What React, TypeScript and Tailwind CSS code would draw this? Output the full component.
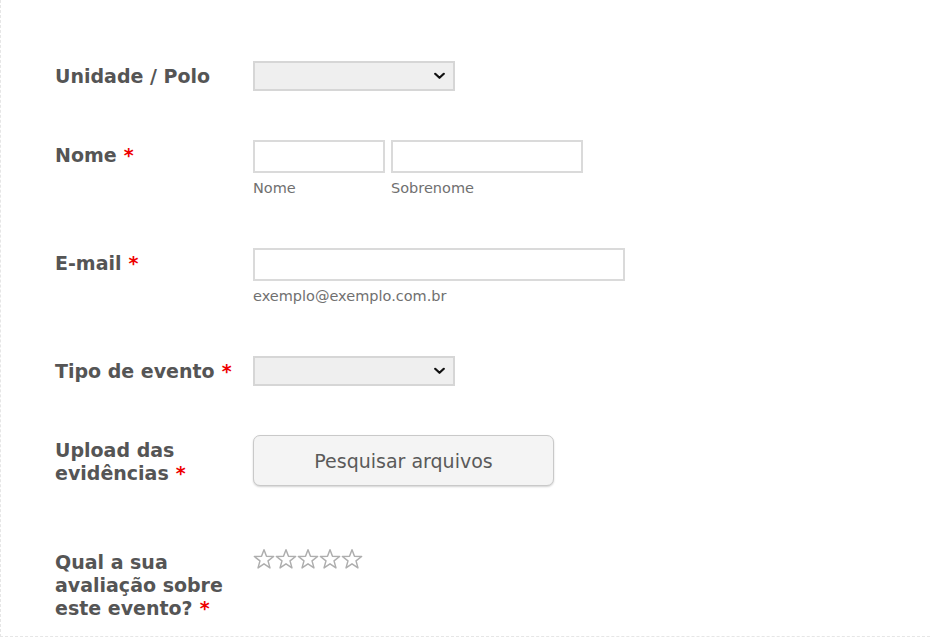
import React from "react";

const font = { fontFamily: '"DejaVu Sans", Verdana, sans-serif' };

function Chevron() {
  return (
    <svg width="11" height="7" viewBox="0 0 11 7" className="absolute right-[8px] top-1/2 -translate-y-1/2">
      <path d="M1.2 1.2 L5.5 5.3 L9.8 1.2" fill="none" stroke="#111" strokeWidth="2.2" strokeLinecap="round" strokeLinejoin="round" />
    </svg>
  );
}

function Select() {
  return (
    <div className="relative w-[202px] h-[30px] bg-[#efefef] border-2 border-[#d6d6d6]">
      <Chevron />
    </div>
  );
}

function Star() {
  return (
    <svg width="22" height="22" viewBox="0 0 24 24">
      <path
        d="M12 1.8 L14.7 9 L22.5 9.3 L16.4 14.1 L18.5 21.7 L12 17.3 L5.5 21.7 L7.6 14.1 L1.5 9.3 L9.3 9 Z"
        fill="#fff"
        stroke="#aeaeae"
        strokeWidth="1.6"
        strokeLinejoin="round"
      />
    </svg>
  );
}

function Req() {
  return <span className="text-[#e00] ml-[7px]">*</span>;
}

function Label({ children }: { children: React.ReactNode }) {
  return (
    <div className="w-[198px] shrink-0 pt-[4px] pr-[4px] text-[19px] leading-[23px] font-bold text-[#555]">
      {children}
    </div>
  );
}

export default function App() {
  return (
    <div style={font} className="w-[930px] h-[638px] bg-white overflow-hidden">
      <div className="h-[637px] border-l border-b border-dashed border-[#e6e6e6] pl-[54px] pt-[61px]">
        <div className="flex items-start">
          <Label>Unidade / Polo</Label>
          <Select />
        </div>

        <div className="flex items-start mt-[49px]">
          <Label>
            Nome<Req />
          </Label>
          <div className="flex gap-[6px]">
            <div>
              <div className="w-[132px] h-[33px] border-2 border-[#dadada] bg-white" />
              <div className="mt-[7px] text-[14.5px] leading-[17px] text-[#707070]">Nome</div>
            </div>
            <div>
              <div className="w-[192px] h-[33px] border-2 border-[#dadada] bg-white" />
              <div className="mt-[7px] text-[14.5px] leading-[17px] text-[#707070]">Sobrenome</div>
            </div>
          </div>
        </div>

        <div className="flex items-start mt-[51px]">
          <Label>
            E-mail<Req />
          </Label>
          <div>
            <div className="w-[372px] h-[33px] border-2 border-[#dadada] bg-white" />
            <div className="mt-[7px] text-[14.5px] leading-[17px] text-[#707070]">exemplo@exemplo.com.br</div>
          </div>
        </div>

        <div className="flex items-start mt-[51px]">
          <Label>
            <span className="whitespace-nowrap">
              Tipo de evento<Req />
            </span>
          </Label>
          <Select />
        </div>

        <div className="flex items-start mt-[49px]">
          <div className="w-[198px] shrink-0 pt-[4px] pr-[40px] text-[19px] leading-[23px] font-bold text-[#555]">
            Upload das evidências<Req />
          </div>
          <div className="w-[301px] h-[51px] rounded-[7px] border border-[#c9c9c9] bg-[#f4f4f4] shadow-[0_1px_2px_rgba(0,0,0,0.18)] flex items-center justify-center pt-[1px] text-[19px] text-[#5a5a5a]">
            Pesquisar arquivos
          </div>
        </div>

        <div className="flex items-start mt-[61px]">
          <div className="w-[198px] shrink-0 pt-[4px] pr-[18px] text-[19px] leading-[23px] font-bold text-[#555]">
            Qual a sua avaliação sobre este evento?<Req />
          </div>
          <div className="flex mt-[1px]">
            <Star />
            <Star />
            <Star />
            <Star />
            <Star />
          </div>
        </div>
      </div>
    </div>
  );
}
